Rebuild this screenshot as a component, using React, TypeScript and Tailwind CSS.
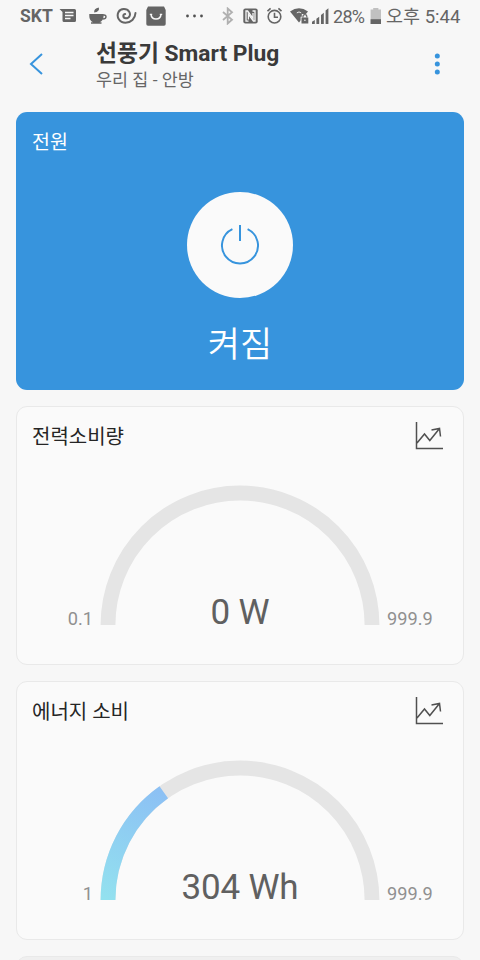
type GaugeCardProps = {
  title: string;
  min: string;
  max: string;
  value: string;
  percent: number;
};

const gauges: GaugeCardProps[] = [
  { title: "전력소비량", min: "0.1", max: "999.9", value: "0 W", percent: 0 },
  { title: "에너지 소비", min: "1", max: "999.9", value: "304 Wh", percent: 30.4 },
];

function StatusBar() {
  return (
    <div className="flex h-8 items-center pl-5 text-[18px] leading-8 whitespace-nowrap text-[#656565]">
      <span className="w-[33px] text-[17.5px] font-bold">SKT</span>
      {/* message */}
      <svg className="ml-[6px] shrink-0" width="18" height="16" viewBox="0 0 18 16">
        <path d="M0.5 1H15.5Q17 1 17 2.5V12.5Q17 14 15.5 14H5Q3.5 14 3.5 12.5V4Z" fill="currentColor" />
        <path d="M6 4.5H14.5M6 7.5H14.5M6 10.5H11.5" stroke="#f7f7f7" strokeWidth="1.5" />
      </svg>
      {/* coffee cup */}
      <svg className="ml-[12px] shrink-0" width="18" height="18" viewBox="0 0 18 18">
        <path d="M0.3 7H14.5V10Q14 14 10.5 15.2H12.5V16.8H2V15.2H4Q0.3 13.5 0.3 9Z" fill="currentColor" />
        <path d="M14 8H15Q17 8 17 9.8Q17 12 13.5 12" fill="none" stroke="currentColor" strokeWidth="1.4" />
        <path d="M5.2 5.6Q4.6 1.5 9.8 0.6Q11 4.8 5.2 5.6Z" fill="currentColor" />
      </svg>
      {/* swirl */}
      <svg className="ml-[9px] shrink-0" width="21" height="18" viewBox="0 0 21 18" fill="none" stroke="currentColor" strokeLinecap="round">
        <path
          d="M9.2 7C6.6 7.3 6.6 11.1 9.8 11.3C13.6 11.3 14.9 7.5 13.2 4.8C11 1.2 4.6 1 2.4 5.2C0.2 10 3.4 15.7 9.5 15.7C15 15.7 19.2 11.6 19.5 6"
          strokeWidth="2"
        />
      </svg>
      {/* shopping bag */}
      <svg className="ml-[9px] shrink-0" width="20" height="20" viewBox="0 0 20 20">
        <path d="M2 0.5H18L19.7 4V18Q19.7 19.7 18 19.7H2Q0.3 19.7 0.3 18V4Z" fill="currentColor" />
        <path d="M5 8.3Q5.5 13 10 13Q14.5 13 15 8.3" fill="none" stroke="#f7f7f7" strokeWidth="1.5" />
        <path d="M3.8 8.4H6.2M13.8 8.4H16.2" stroke="#f7f7f7" strokeWidth="1.3" />
      </svg>
      <svg className="ml-[20px] shrink-0" width="18" height="4" viewBox="0 0 18 4" fill="#505050">
        <circle cx="1.5" cy="2" r="1.4" />
        <circle cx="8.5" cy="2" r="1.4" />
        <circle cx="15.5" cy="2" r="1.4" />
      </svg>
      {/* bluetooth */}
      <svg className="ml-[18px] shrink-0" width="12" height="18" viewBox="0 0 12 18" fill="none" stroke="#b0b0b0" strokeWidth="1.8">
        <path d="M1 5L10 12.7L5.7 16.5V1.5L10 5.3L1 13" />
      </svg>
      {/* nfc */}
      <svg className="ml-[9px] shrink-0" width="15" height="16" viewBox="0 0 15 16">
        <rect x="0.3" y="0.5" width="14.4" height="15" rx="2" fill="currentColor" />
        <path d="M5.5 13.2H3V3H4.6L10 10.5V5" fill="none" stroke="#f7f7f7" strokeWidth="1.3" />
        <path d="M9.5 3H12V13H10.4L5.4 6V11.5" fill="none" stroke="#f7f7f7" strokeWidth="1.3" />
      </svg>
      {/* alarm */}
      <svg className="ml-[9px] shrink-0" width="16" height="18" viewBox="0 0 16 18" fill="none" stroke="currentColor" strokeWidth="1.6">
        <circle cx="7.5" cy="9.7" r="6.3" />
        <path d="M7.5 5.7V10.2H11M0.5 4.2L3.6 1.3M11.4 1.3L14.5 4.2" />
      </svg>
      {/* wifi with lock */}
      <svg className="ml-[7px] shrink-0" width="19" height="18" viewBox="0 0 19 18">
        <path d="M0 4.6Q9 -1.9 18 4.6L9 15.5Z" fill="currentColor" />
        <path d="M6.8 5.9Q9 4 11.2 5.9" fill="none" stroke="#f7f7f7" strokeWidth="0.9" />
        <path d="M10.6 9.8H11.8V7H17.6V9.8H18.8V17.5H10.6Z" fill="#f7f7f7" />
        <rect x="11.5" y="10.5" width="6.8" height="6" fill="currentColor" />
        <path d="M13 10.5V9Q13 7.6 14.9 7.6Q16.8 7.6 16.8 9V10.5" fill="none" stroke="currentColor" strokeWidth="1.2" />
        <circle cx="14.9" cy="13.3" r="0.8" fill="#f7f7f7" />
      </svg>
      {/* signal */}
      <svg className="ml-[3px] shrink-0" width="17" height="18" viewBox="0 0 17 18" fill="currentColor">
        <path d="M0 14.8L2.8 13V17H0ZM4.4 11.8L7.2 9.8V17H4.4ZM9 8L11.8 5.8V17H9ZM13.6 3.5L16.4 1.2V17H13.6Z" />
      </svg>
      <span className="ml-[4px] w-[34px] pt-px tracking-[-0.7px]">28%</span>
      {/* battery */}
      <svg className="ml-[3px] shrink-0" width="12" height="18" viewBox="0 0 12 18">
        <path d="M3.2 1H8.4V2.6H11V17H0.6V2.6H3.2Z" fill="#c0c0c0" />
        <rect x="0.6" y="12.2" width="10.4" height="4.8" fill="currentColor" />
      </svg>
      <span className="ml-[4px] pt-px text-[18.5px]">오후 5:44</span>
    </div>
  );
}

function Header() {
  return (
    <header className="flex h-20 items-start">
      <svg className="mt-[20px] ml-[28px]" width="18" height="24" viewBox="0 0 18 24" fill="none" stroke="#3794dd" strokeWidth="2">
        <path d="M14 2L3 12L14 22" />
      </svg>
      <div className="mt-[7px] ml-[50px] flex-1">
        <h1 className="text-[22.8px] leading-[30px] font-bold text-[#3a3a3a]">선풍기 Smart Plug</h1>
        <p className="text-[17.4px] leading-[22px] text-[#666666]">우리 집 - 안방</p>
      </div>
      <svg className="mt-[20px] mr-[37px]" width="12" height="24" viewBox="0 0 12 24" fill="#3794dd">
        <circle cx="6.3" cy="4" r="2.5" />
        <circle cx="6.3" cy="12" r="2.5" />
        <circle cx="6.3" cy="20" r="2.5" />
      </svg>
    </header>
  );
}

function PowerCard() {
  return (
    <section className="flex h-[278px] flex-col items-center rounded-[11px] bg-[#3794dd] text-white">
      <h2 className="mt-[16px] w-full px-4 text-[19.5px] leading-[30px]">전원</h2>
      <button className="mt-[34px] flex size-[106px] items-center justify-center rounded-full bg-[#fafafa]">
        <svg width="40" height="42" viewBox="0 0 40 42" fill="none" stroke="#3794dd" strokeWidth="2">
          <path d="M12.4 5.2A18 18 0 1 0 27.6 5.2M20 1V17" />
        </svg>
      </button>
      <p className="mt-[23px] text-[35px] leading-[50px] font-[350]">켜짐</p>
    </section>
  );
}

function ChartIcon() {
  return (
    <svg width="30" height="30" viewBox="0 0 30 30" fill="none" stroke="#505050" strokeWidth="1.5">
      <path d="M1.5 1V27.5H28M2 22L9.5 13L14.8 19.5L24.5 7.5M16.5 9L24.5 7.5L25.5 15.5" />
    </svg>
  );
}

function GaugeCard({ title, min, max, value, percent }: GaugeCardProps) {
  return (
    <section className="h-[259px] rounded-[11px] border border-[#e9e9e9] bg-[#fafafa]">
      <div className="flex h-[77px] items-start justify-between pr-[18px] pl-[15px]">
        <h2 className="mt-[15px] text-[20px] leading-[30px] text-[#252525]">{title}</h2>
        <button className="mt-[14px]">
          <ChartIcon />
        </button>
      </div>
      <div className="relative flex items-end justify-center text-[18.2px] leading-[22px] text-[#909090]">
        <span className="mr-[7px] -mb-[5px] flex-1 text-right">{min}</span>
        <svg className="shrink-0" width="280" height="141" viewBox="0 0 280 141" fill="none" strokeWidth="14.8">
          <defs>
            <linearGradient id="fill" gradientUnits="userSpaceOnUse" x1="8" y1="141" x2="64" y2="33">
              <stop offset="0" stopColor="#93e1ef" />
              <stop offset="1" stopColor="#8cc0f4" />
            </linearGradient>
          </defs>
          <path d="M8 141A132 132 0 0 1 272 141" stroke="#e5e5e5" />
          {percent > 0 && (
            <path
              d="M8 141A132 132 0 0 1 272 141"
              stroke="url(#fill)"
              pathLength="100"
              strokeDasharray={`${percent} 100`}
            />
          )}
        </svg>
        <span className="-mb-[5px] ml-[7px] flex-1">{max}</span>
        <p className="absolute inset-x-0 -bottom-[10px] text-center text-[35px] leading-[44px] tracking-[-0.2px] text-[#606060]">{value}</p>
      </div>
    </section>
  );
}

export default function App() {
  return (
    <div className="h-[960px] w-[480px] overflow-hidden bg-[#f7f7f7] font-[Roboto,'Noto_Sans_CJK_KR',sans-serif]">
      <StatusBar />
      <Header />
      <main className="grid gap-4 px-4">
        <PowerCard />
        {gauges.map((gauge) => (
          <GaugeCard key={gauge.title} {...gauge} />
        ))}
        <section className="h-[120px] rounded-[11px] border border-[#e9e9e9] bg-[#efefef]" />
      </main>
    </div>
  );
}
